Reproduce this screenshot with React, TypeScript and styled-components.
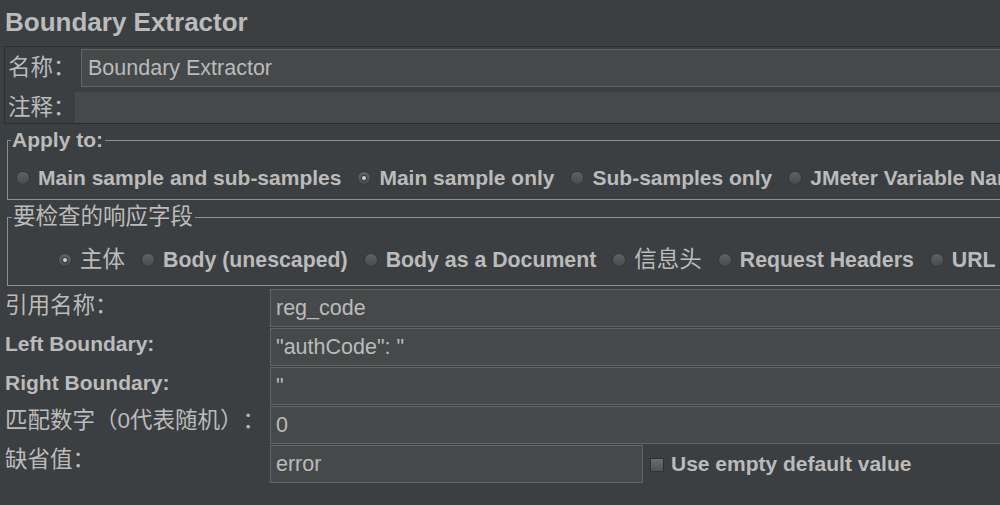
import React from "react";
import styled, { createGlobalStyle } from "styled-components";

const Global = createGlobalStyle`
  html, body {
    margin: 0;
    padding: 0;
    background: #3c3f41;
    overflow: hidden;
  }
  body {
    font-family: "Liberation Sans", Arial, "Noto Sans CJK SC", sans-serif;
    color: #bbbbbb;
    text-spacing-trim: space-all;
  }
  #root {
    width: 1000px;
    height: 505px;
    overflow: hidden;
  }
`;

const Page = styled.div`
  width: 1100px;
  display: flex;
  flex-direction: column;
`;

const Title = styled.h1`
  margin: 0;
  padding: 7px 0 9px 5px;
  font-size: 26px;
  line-height: 30px;
  font-weight: bold;
  color: #bbbbbb;
`;

const NamePanel = styled.div`
  margin-left: 4px;
  border: 1px solid #2b2d2f;
  padding: 2px 0 0 3px;
  display: flex;
  flex-direction: column;
  gap: 5px;
`;

const NameRow = styled.div<{ $labelWidth: number; $height: number }>`
  display: grid;
  grid-template-columns: ${(p) => p.$labelWidth}px 1fr;
  height: ${(p) => p.$height}px;
  align-items: stretch;
`;

const Label = styled.div<{ $cjk?: boolean; $lift?: number }>`
  display: flex;
  align-items: center;
  box-sizing: border-box;
  padding-bottom: ${(p) => (p.$lift ?? 0) * 2}px;
  font-size: ${(p) => (p.$cjk ? 22.5 : 21)}px;
  line-height: 24px;
  font-weight: ${(p) => (p.$cjk ? "normal" : "bold")};
  white-space: nowrap;
  color: #bbbbbb;
`;

const Field = styled.div<{ $bordered?: boolean; $width?: number }>`
  box-sizing: border-box;
  display: flex;
  align-items: center;
  height: 100%;
  ${(p) => (p.$width ? `width: ${p.$width}px; flex: none;` : "")}
  background: #45494a;
  border: ${(p) => (p.$bordered === false ? "none" : "1px solid #646464")};
  padding-left: ${(p) => (p.$bordered === false ? 6 : 5)}px;
  font-size: 21.5px;
  line-height: 24px;
  color: #bbbbbb;
  white-space: pre;
  overflow: hidden;
`;

const NameField = styled(Field)`
  padding-left: 6px;
`;

const Group = styled.fieldset<{ $mt: number }>`
  margin: ${(p) => p.$mt}px 0 0 7px;
  padding: 0;
  border: 1px solid #8f8f8f;
  min-width: 0;
`;

const GroupTitle = styled.legend<{ $cjk?: boolean }>`
  margin-left: ${(p) => (p.$cjk ? 4 : 3)}px;
  padding: 0 2px 0 1px;
  font-size: ${(p) => (p.$cjk ? 22.5 : 21)}px;
  line-height: 24px;
  font-weight: ${(p) => (p.$cjk ? "normal" : "bold")};
  color: #bbbbbb;
`;

const RadioRow = styled.div<{ $pt: number; $pb: number; $pl: number; $size: number }>`
  display: flex;
  align-items: center;
  gap: 16px;
  height: 26px;
  padding: ${(p) => `${p.$pt}px 0 ${p.$pb}px ${p.$pl}px`};
  font-size: ${(p) => p.$size}px;
  white-space: nowrap;
`;

const RadioItem = styled.label<{ $cjk?: boolean }>`
  display: flex;
  align-items: center;
  gap: 8px;
  ${(p) => (p.$cjk ? "font-size: 22.5px;" : "")}
  line-height: 24px;
  font-weight: ${(p) => (p.$cjk ? "normal" : "bold")};
  color: #bbbbbb;
`;

const RadioDot = styled.span<{ $checked?: boolean }>`
  box-sizing: border-box;
  flex: none;
  width: 14px;
  height: 14px;
  border-radius: 50%;
  border: 1px solid #35383a;
  background: linear-gradient(#5f6366, #484b4d);
  display: flex;
  align-items: center;
  justify-content: center;
  &::after {
    content: "";
    display: ${(p) => (p.$checked ? "block" : "none")};
    width: 4px;
    height: 4px;
    border-radius: 50%;
    background: #cfcfcf;
    box-shadow: 0 0 0 1px #3a3d3f;
  }
`;

const Form = styled.div`
  margin-top: 3px;
  padding-left: 5px;
  display: grid;
  grid-template-columns: 265px 1fr;
  grid-auto-rows: 38px;
  row-gap: 1px;
`;

const FieldWithCheck = styled.div`
  display: flex;
  align-items: center;
  gap: 7px;
  height: 100%;
`;

const CheckItem = styled.label`
  display: flex;
  align-items: center;
  gap: 7px;
  font-size: 21px;
  line-height: 24px;
  font-weight: bold;
  color: #bbbbbb;
  white-space: nowrap;
`;

const CheckBox = styled.span`
  box-sizing: border-box;
  flex: none;
  width: 14px;
  height: 14px;
  border: 1px solid #2e3032;
  background: linear-gradient(#6a6d70, #505355);
  margin-top: 1px;
`;

const Radio: React.FC<{ label: string; checked?: boolean; cjk?: boolean }> = ({
  label,
  checked,
  cjk,
}) => (
  <RadioItem $cjk={cjk}>
    <RadioDot $checked={checked} />
    {label}
  </RadioItem>
);

export default function App() {
  return (
    <Page>
      <Global />
      <Title>Boundary Extractor</Title>
      <NamePanel>
        <NameRow $labelWidth={73} $height={38}>
          <Label $cjk>名称：</Label>
          <NameField>Boundary Extractor</NameField>
        </NameRow>
        <NameRow $labelWidth={67} $height={31}>
          <Label $cjk>注释：</Label>
          <Field $bordered={false} />
        </NameRow>
      </NamePanel>

      <Group $mt={4}>
        <GroupTitle>Apply to:</GroupTitle>
        <RadioRow $pt={13} $pb={8} $pl={8} $size={21}>
          <Radio label="Main sample and sub-samples" />
          <Radio label="Main sample only" checked />
          <Radio label="Sub-samples only" />
          <Radio label="JMeter Variable Name to use" />
        </RadioRow>
      </Group>

      <Group $mt={5}>
        <GroupTitle $cjk>要检查的响应字段</GroupTitle>
        <RadioRow $pt={18} $pb={12} $pl={50} $size={21.3}>
          <Radio label="主体" checked cjk />
          <Radio label="Body (unescaped)" />
          <Radio label="Body as a Document" />
          <Radio label="信息头" cjk />
          <Radio label="Request Headers" />
          <Radio label="URL" />
          <Radio label="响应代码" cjk />
        </RadioRow>
      </Group>

      <Form>
        <Label $cjk $lift={2}>引用名称：</Label>
        <Field>reg_code</Field>
        <Label $lift={3}>Left Boundary:</Label>
        <Field>{'"authCode": "'}</Field>
        <Label $lift={3}>Right Boundary:</Label>
        <Field>{'"'}</Field>
        <Label $cjk $lift={4}>匹配数字（0代表随机）：</Label>
        <Field>0</Field>
        <Label $cjk $lift={4}>缺省值：</Label>
        <FieldWithCheck>
          <Field $width={373}>error</Field>
          <CheckItem>
            <CheckBox />
            Use empty default value
          </CheckItem>
        </FieldWithCheck>
      </Form>
    </Page>
  );
}
